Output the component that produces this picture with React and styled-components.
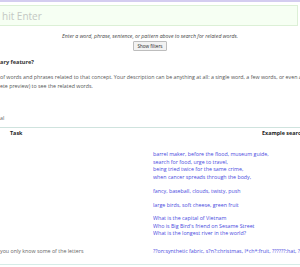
import styled, { createGlobalStyle } from 'styled-components';

const GlobalStyle = createGlobalStyle`
    html, body {
        margin: 0;
        padding: 0;
        background: #ffffff;
    }
    body {
        font-family: "Open Sans", "Liberation Sans", sans-serif;
        overflow: hidden;
    }
`;

const Page = styled.div`
    width: 300px;
    height: 267px;
    overflow: hidden;
    border-top: 2px solid #d4cdf0;
    box-sizing: border-box;
`;

const SearchBox = styled.div`
    margin: 3px 2px 0 0;
    height: 19px;
    background: #f6fff3;
    border: 1px solid #dcf0d6;
    border-left: none;
    display: flex;
    align-items: center;
    padding-left: 2px;
    font-size: 10px;
    color: #c4c8c4;
    white-space: nowrap;
`;

const Hint = styled.p`
    margin: 7px 0 0;
    text-align: center;
    font-style: italic;
    font-size: 5.2px;
    line-height: 7px;
    color: #444;
`;

const FilterRow = styled.div`
    display: flex;
    justify-content: center;
    margin-top: 1px;
`;

const FilterButton = styled.button`
    font-family: inherit;
    font-size: 4.6px;
    line-height: 6px;
    padding: 1px 3px;
    background: #f2f2f2;
    border: 1px solid #bdbdbd;
    border-radius: 1px;
    color: #222;
`;

const Section = styled.section`
    margin-top: 8px;
    white-space: nowrap;
    overflow: hidden;
`;

const Question = styled.h3`
    margin: 0 0 7px;
    font-size: 5.6px;
    line-height: 7px;
    font-weight: bold;
    color: #333;
`;

const Body = styled.p`
    margin: 0;
    font-size: 5.3px;
    line-height: 8.5px;
    color: #555;
`;

const Stub = styled.p`
    margin: 25px 0 0;
    font-size: 5.3px;
    line-height: 7px;
    color: #666;
`;

const Table = styled.div`
    margin-top: 5px;
    border-top: 1px solid #cfe3de;
    border-bottom: 1px solid #d6ece7;
    display: grid;
    grid-template-columns: 153px 1fr;
    padding-bottom: 9px;
`;

const HeadCell = styled.div`
    font-size: 5.4px;
    line-height: 7px;
    font-weight: bold;
    color: #222;
    padding: 2px 0 0 ${p => p.$indent || 0}px;
    white-space: nowrap;
    overflow: hidden;
`;

const TaskCell = styled.div`
    font-size: 5.3px;
    line-height: 7.5px;
    color: #666;
    margin-top: ${p => p.$gap}px;
    white-space: nowrap;
    display: flex;
    align-items: flex-end;
`;

const ExampleCell = styled.div`
    font-size: 5.3px;
    line-height: 7.5px;
    color: #4a4ae0;
    margin-top: ${p => p.$gap}px;
    white-space: nowrap;
    overflow: hidden;
`;

const rows = [
    {
        gap: 14,
        task: '',
        lines: [
            'barrel maker, before the flood, museum guide,',
            'search for food, urge to travel,',
            'being tried twice for the same crime,',
            'when cancer spreads through the body,',
        ],
    },
    { gap: 7, task: '', lines: ['fancy, baseball, clouds, twisty, push'] },
    { gap: 6, task: '', lines: ['large birds, soft cheese, green fruit'] },
    {
        gap: 6,
        task: '',
        lines: [
            'What is the capital of Vietnam',
            "Who is Big Bird's friend on Sesame Street",
            'What is the longest river in the world?',
        ],
    },
    {
        gap: 10,
        task: 'you only know some of the letters',
        lines: ['??on:synthetic fabric, s?n?:christmas, l*ch*:fruit, ??????:hat, ?????:bird'],
    },
];

function App() {
    return (
        <Page>
            <GlobalStyle />
            <SearchBox>hit Enter</SearchBox>
            <Hint>Enter a word, phrase, sentence, or pattern above to search for related words.</Hint>
            <FilterRow>
                <FilterButton>Show filters</FilterButton>
            </FilterRow>
            <Section>
                <Question>ary feature?</Question>
                <Body>of words and phrases related to that concept. Your description can be anything at all: a single word, a few words, or even a whole sentence.</Body>
                <Body>ete preview) to see the related words.</Body>
                <Stub>al</Stub>
                <Table>
                    <HeadCell $indent={10}>Task</HeadCell>
                    <HeadCell $indent={109}>Example search</HeadCell>
                    {rows.map((row, i) => (
                        [
                            <TaskCell key={'t' + i} $gap={row.gap}>{row.task}</TaskCell>,
                            <ExampleCell key={'e' + i} $gap={row.gap}>
                                {row.lines.map(line => <div key={line}>{line}</div>)}
                            </ExampleCell>,
                        ]
                    ))}
                </Table>
            </Section>
        </Page>
    );
}

export default App;
